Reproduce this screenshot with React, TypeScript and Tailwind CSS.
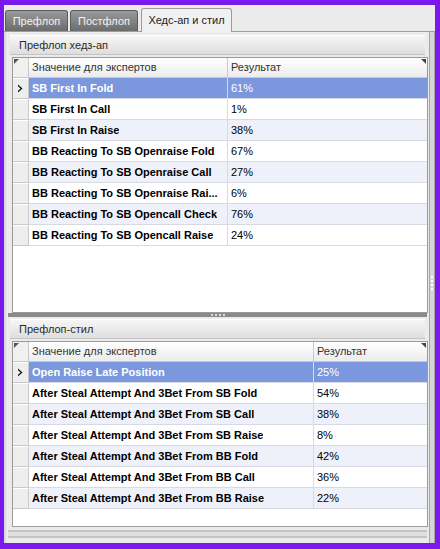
import type { ReactNode } from 'react';

type Row = { name: string; value: string };

const headsUp: Row[] = [
  { name: 'SB First In Fold', value: '61%' },
  { name: 'SB First In Call', value: '1%' },
  { name: 'SB First In Raise', value: '38%' },
  { name: 'BB Reacting To SB Openraise Fold', value: '67%' },
  { name: 'BB Reacting To SB Openraise Call', value: '27%' },
  { name: 'BB Reacting To SB Openraise Rai...', value: '6%' },
  { name: 'BB Reacting To SB Opencall Check', value: '76%' },
  { name: 'BB Reacting To SB Opencall Raise', value: '24%' }
];

const style: Row[] = [
  { name: 'Open Raise Late Position', value: '25%' },
  { name: 'After Steal Attempt And 3Bet From SB Fold', value: '54%' },
  { name: 'After Steal Attempt And 3Bet From SB Call', value: '38%' },
  { name: 'After Steal Attempt And 3Bet From SB Raise', value: '8%' },
  { name: 'After Steal Attempt And 3Bet From BB Fold', value: '42%' },
  { name: 'After Steal Attempt And 3Bet From BB Call', value: '36%' },
  { name: 'After Steal Attempt And 3Bet From BB Raise', value: '22%' }
];

const Pointer = () => (
  <svg width="7" height="9" viewBox="0 0 7 9">
    <path d="M1 0.5 L5.5 4.5 L1 8.5 L1 6.8 L3.6 4.5 L1 2.2 Z" fill="#111" />
  </svg>
);

const GroupHeader = ({ children }: { children: ReactNode }) => (
  <div className="mx-[4px] flex h-[20px] items-center border-y border-[#c4c4c4] border-t-white bg-gradient-to-b from-[#f6f6f6] to-[#dedede] pl-[9px] text-[11px] text-[#2a2a2a]">
    {children}
  </div>
);

const Grid = ({ rows, col1, height }: { rows: Row[]; col1: string; height: string }) => (
  <div className={`ml-[6px] mr-[1px] mt-[2px] flex flex-col border border-[#9a9a9a] bg-white ${height}`}>
    <div className="flex h-[20px] border-b border-[#c8c8c8] bg-gradient-to-b from-white to-[#ececec] text-[11px] text-[#333]">
      <div className="relative w-[16px] border-r border-[#c8c8c8] bg-[#f0f0f0]">
        <div className="absolute left-[1px] top-[1px] h-0 w-0 border-r-[5px] border-t-[5px] border-r-transparent border-t-[#555]" />
      </div>
      <div className={`flex items-center border-r border-[#c8c8c8] pl-[3px] ${col1}`}>Значение для экспертов</div>
      <div className="relative flex flex-1 items-center pl-[3px]">
        Результат
        <div className="absolute right-[1px] top-[1px] h-0 w-0 border-l-[5px] border-t-[5px] border-l-transparent border-t-[#444]" />
      </div>
    </div>
    {rows.map((row, i) => {
      const selected = i === 0;
      const bg = selected ? 'bg-[#7b97de] text-white' : i % 2 === 0 ? 'bg-[#eff1fa] text-black' : 'bg-white text-black';
      return (
        <div className="flex h-[21px] text-[11px]" key={row.name}>
          <div className="flex w-[16px] items-center justify-center border-b border-r border-[#c9c9c9] border-t border-t-white bg-[#eeeeee]">
            {selected && <Pointer />}
          </div>
          <div className={`flex items-center border-b border-r border-[#d8d9e2] pl-[3px] font-bold ${col1} ${bg}`}>
            <span className="truncate">{row.name}</span>
          </div>
          <div className={`flex flex-1 items-center border-b border-[#d8d9e2] pl-[3px] ${bg}`}>{row.value}</div>
        </div>
      );
    })}
  </div>
);

const App = () => {
  return (
    <div className="flex h-[549px] w-[440px] flex-col bg-[#7a18ee] pb-[6px] pl-[4px] pr-[5px] pt-[5px] [font-family:'Liberation_Sans',Arial,sans-serif]">
      <div className="flex flex-1 flex-col bg-[#ebebeb]">
        <div className="flex h-[27px] items-end gap-[2px] border-b border-[#9c9c9c] pl-[1px]">
          <div className="flex h-[21px] w-[63px] items-center justify-center rounded-t-[3px] border border-b-0 border-[#5c5c5c] bg-gradient-to-b from-[#9a9a9a] to-[#6c6c6c] text-[11px] text-[#f2f2f2]">
            Префлоп
          </div>
          <div className="flex h-[21px] w-[68px] items-center justify-center rounded-t-[3px] border border-b-0 border-[#5c5c5c] bg-gradient-to-b from-[#9a9a9a] to-[#6c6c6c] text-[11px] text-[#f2f2f2]">
            Постфлоп
          </div>
          <div className="-mb-[1px] ml-[1px] flex h-[24px] w-[91px] items-center justify-center rounded-t-[3px] border border-b-0 border-[#9c9c9c] bg-[#f0f0f0] text-[11px] text-[#222]">
            Хедс-ап и стил
          </div>
        </div>
        <div className="flex flex-1">
          <div className="flex flex-1 flex-col border-l-[2px] border-[#d8d8d8] pt-[3px]">
            <GroupHeader>Префлоп хедз-ап</GroupHeader>
            <Grid rows={headsUp} col1="w-[199px]" height="h-[256px]" />
            <div className="mx-[2px] flex h-[6px] items-start justify-center">
              <div className="flex h-[4px] w-full items-center justify-center gap-[2px] bg-[#8a8a8a]">
                <span className="h-[2px] w-[2px] bg-[#dcdcdc]" />
                <span className="h-[2px] w-[2px] bg-[#dcdcdc]" />
                <span className="h-[2px] w-[2px] bg-[#dcdcdc]" />
                <span className="h-[2px] w-[2px] bg-[#dcdcdc]" />
              </div>
            </div>
            <GroupHeader>Префлоп-стил</GroupHeader>
            <Grid rows={style} col1="w-[285px]" height="h-[186px]" />
            <div className="mx-[2px] mt-[3px] h-[8px] border-y-[2px] border-[#c4c4c4] bg-[#e0e0e0]" />
          </div>
          <div className="flex w-[6px] flex-col items-center border-x border-[#a6a6a6] bg-[#d6d6d6] pt-[244px]">
            <div className="flex flex-col gap-[2px]">
              <span className="h-[2px] w-[2px] bg-white" />
              <span className="h-[2px] w-[2px] bg-white" />
              <span className="h-[2px] w-[2px] bg-white" />
              <span className="h-[2px] w-[2px] bg-white" />
            </div>
          </div>
        </div>
      </div>
    </div>
  );
};

export default App;
